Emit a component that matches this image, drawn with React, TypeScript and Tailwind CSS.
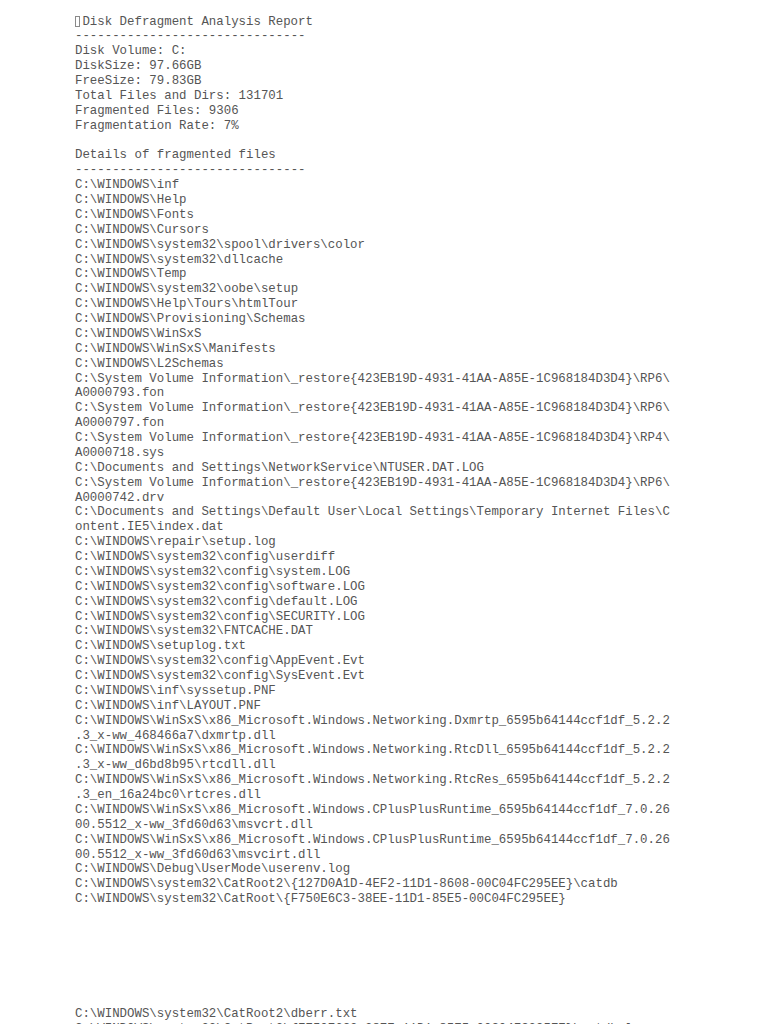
import React from 'react';

const summary = [
  'Disk Volume: C:',
  'DiskSize: 97.66GB',
  'FreeSize: 79.83GB',
  'Total Files and Dirs: 131701',
  'Fragmented Files: 9306',
  'Fragmentation Rate: 7%',
];

const restore = 'C:\\System Volume Information\\_restore{423EB19D-4931-41AA-A85E-1C968184D3D4}';

const files = [
  'C:\\WINDOWS\\inf',
  'C:\\WINDOWS\\Help',
  'C:\\WINDOWS\\Fonts',
  'C:\\WINDOWS\\Cursors',
  'C:\\WINDOWS\\system32\\spool\\drivers\\color',
  'C:\\WINDOWS\\system32\\dllcache',
  'C:\\WINDOWS\\Temp',
  'C:\\WINDOWS\\system32\\oobe\\setup',
  'C:\\WINDOWS\\Help\\Tours\\htmlTour',
  'C:\\WINDOWS\\Provisioning\\Schemas',
  'C:\\WINDOWS\\WinSxS',
  'C:\\WINDOWS\\WinSxS\\Manifests',
  'C:\\WINDOWS\\L2Schemas',
  restore + '\\RP6\\',
  'A0000793.fon',
  restore + '\\RP6\\',
  'A0000797.fon',
  restore + '\\RP4\\',
  'A0000718.sys',
  'C:\\Documents and Settings\\NetworkService\\NTUSER.DAT.LOG',
  restore + '\\RP6\\',
  'A0000742.drv',
  'C:\\Documents and Settings\\Default User\\Local Settings\\Temporary Internet Files\\C',
  'ontent.IE5\\index.dat',
  'C:\\WINDOWS\\repair\\setup.log',
  'C:\\WINDOWS\\system32\\config\\userdiff',
  'C:\\WINDOWS\\system32\\config\\system.LOG',
  'C:\\WINDOWS\\system32\\config\\software.LOG',
  'C:\\WINDOWS\\system32\\config\\default.LOG',
  'C:\\WINDOWS\\system32\\config\\SECURITY.LOG',
  'C:\\WINDOWS\\system32\\FNTCACHE.DAT',
  'C:\\WINDOWS\\setuplog.txt',
  'C:\\WINDOWS\\system32\\config\\AppEvent.Evt',
  'C:\\WINDOWS\\system32\\config\\SysEvent.Evt',
  'C:\\WINDOWS\\inf\\syssetup.PNF',
  'C:\\WINDOWS\\inf\\LAYOUT.PNF',
  'C:\\WINDOWS\\WinSxS\\x86_Microsoft.Windows.Networking.Dxmrtp_6595b64144ccf1df_5.2.2',
  '.3_x-ww_468466a7\\dxmrtp.dll',
  'C:\\WINDOWS\\WinSxS\\x86_Microsoft.Windows.Networking.RtcDll_6595b64144ccf1df_5.2.2',
  '.3_x-ww_d6bd8b95\\rtcdll.dll',
  'C:\\WINDOWS\\WinSxS\\x86_Microsoft.Windows.Networking.RtcRes_6595b64144ccf1df_5.2.2',
  '.3_en_16a24bc0\\rtcres.dll',
  'C:\\WINDOWS\\WinSxS\\x86_Microsoft.Windows.CPlusPlusRuntime_6595b64144ccf1df_7.0.26',
  '00.5512_x-ww_3fd60d63\\msvcrt.dll',
  'C:\\WINDOWS\\WinSxS\\x86_Microsoft.Windows.CPlusPlusRuntime_6595b64144ccf1df_7.0.26',
  '00.5512_x-ww_3fd60d63\\msvcirt.dll',
  'C:\\WINDOWS\\Debug\\UserMode\\userenv.log',
  'C:\\WINDOWS\\system32\\CatRoot2\\{127D0A1D-4EF2-11D1-8608-00C04FC295EE}\\catdb',
  'C:\\WINDOWS\\system32\\CatRoot\\{F750E6C3-38EE-11D1-85E5-00C04FC295EE}',
];

const nextPage = [
  'C:\\WINDOWS\\system32\\CatRoot2\\dberr.txt',
  'C:\\WINDOWS\\system32\\CatRoot2\\{F750E6C3-38EE-11D1-85E5-00C04FC295EE}\\catdb.log',
];

const rule = '-------------------------------';

const Line: React.FC<{ text: string }> = ({ text }) => <div className="whitespace-pre">{text}</div>;

export default function App() {
  return (
    <div className="h-[1024px] w-[768px] overflow-hidden bg-white pl-[75px] pt-[14.5px] text-[12.4px] leading-[14.88px] text-[#555555] [font-family:'Liberation_Mono','Courier_New',monospace]">
      <div className="flex items-center whitespace-pre">
        <span className="inline-flex w-[1ch] items-center">
          <span className="inline-block h-[11px] w-[5px] border border-[#8a8a8a]" />
        </span>
        <span>Disk Defragment Analysis Report</span>
      </div>
      <Line text={rule} />
      {summary.map((s) => (
        <Line key={s} text={s} />
      ))}
      <div className="h-[14.88px]" />
      <Line text="Details of fragmented files" />
      <Line text={rule} />
      {files.map((f, i) => (
        <Line key={i} text={f} />
      ))}

      {/* page break in the original print */}
      <div className="h-[100px]" />
      {nextPage.map((f, i) => (
        <Line key={i} text={f} />
      ))}
    </div>
  );
}
